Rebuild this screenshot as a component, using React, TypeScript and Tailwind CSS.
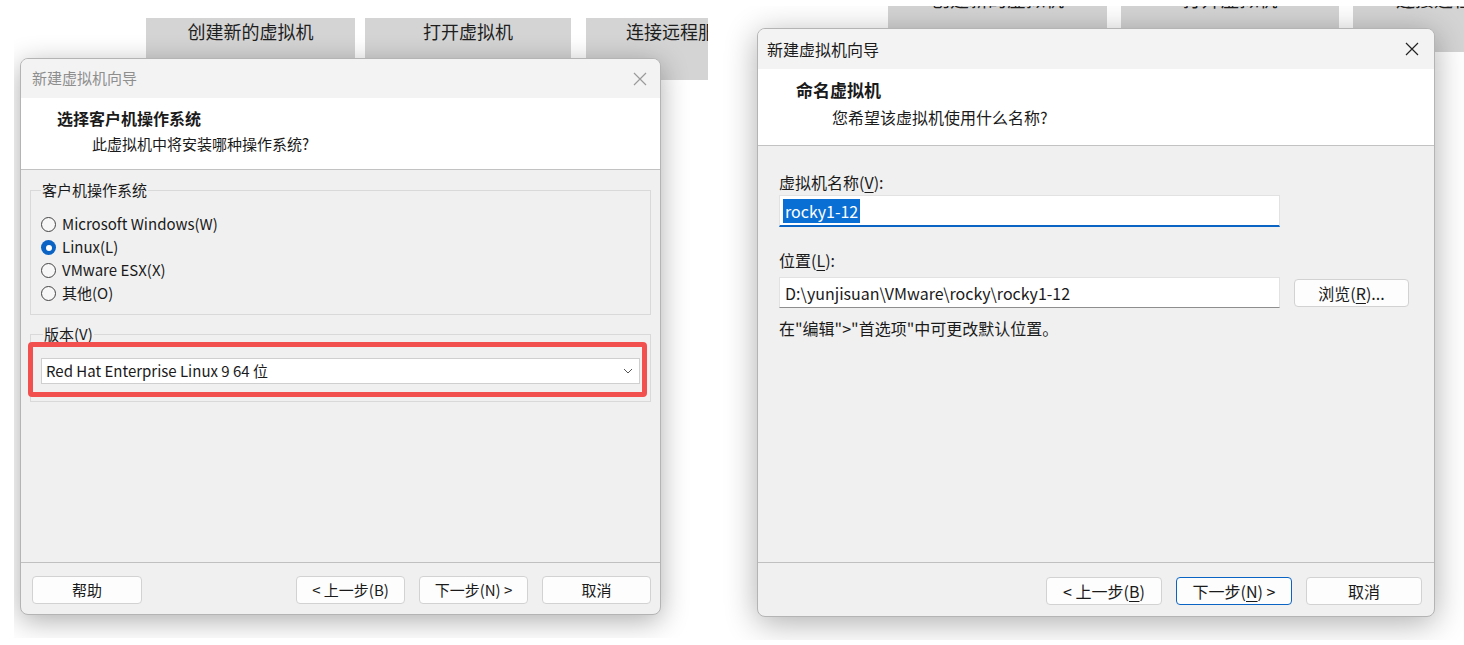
import type { ReactNode } from 'react';

// 向导窗口用到的公共小部件
function CloseIcon({ className }: { className?: string }) {
  return (
    <svg className={className} viewBox="0 0 14 14" fill="none" stroke="currentColor" strokeWidth={1.2}>
      <path d="M1 1l12 12M13 1L1 13" />
    </svg>
  );
}

function Chevron() {
  return (
    <svg className="h-[6px] w-[10px] text-[#555]" viewBox="0 0 10 6" fill="none" stroke="currentColor" strokeWidth={1}>
      <path d="M1 1l4 4 4-4" />
    </svg>
  );
}

function Radio({ label, checked }: { label: string; checked?: boolean }) {
  return (
    <div className="flex h-[23px] items-center">
      {checked ? (
        <span className="flex h-[15px] w-[15px] items-center justify-center rounded-full bg-[#0b63c4]">
          <span className="h-[6px] w-[6px] rounded-full bg-white" />
        </span>
      ) : (
        <span className="h-[15px] w-[15px] rounded-full border border-[#444] bg-[#f7f7f7]" />
      )}
      <span className="ml-[6px]">{label}</span>
    </div>
  );
}

function Btn({ children, className }: { children: ReactNode; className: string }) {
  return (
    <div
      className={`flex h-[28px] flex-none items-center justify-center rounded-[4px] border bg-[#fdfdfd] ${className}`}
    >
      {children}
    </div>
  );
}

function U({ children }: { children: ReactNode }) {
  return <span className="underline underline-offset-[3px]">{children}</span>;
}

function Tab({ label, className }: { label: string; className: string }) {
  return (
    <div className={`flex flex-none justify-center bg-[#d4d4d4] text-[#1e1e1e] ${className}`}>
      {label}
    </div>
  );
}

function OsWizard() {
  return (
    <div className="relative z-10 ml-[6px] -mt-[22px] flex h-[557px] w-[641px] flex-col overflow-hidden rounded-[8px] border border-[#b4b4b4] bg-[#f0f0f0] text-[15px] text-[#1a1a1a] shadow-[0_6px_28px_rgba(0,0,0,0.32)]">
      <div className="flex h-[39px] flex-none items-center justify-between bg-[#f3f3f3] pl-[11px] pr-[13px] text-[#8e8e8e]">
        <span>新建虚拟机向导</span>
        <CloseIcon className="h-[14px] w-[14px] text-[#9a9a9a]" />
      </div>
      <div className="h-[72px] flex-none border-b border-[#c2c2c2] bg-white pl-[36px] pt-[8px]">
        <div className="text-[16px] font-bold leading-[24px]">选择客户机操作系统</div>
        <div className="mt-[3px] pl-[35px] leading-[22px]">此虚拟机中将安装哪种操作系统?</div>
      </div>

      <div className="flex-1 px-[9px] pt-[9px]">
        <fieldset className="border border-[#d9d9d9] px-[10px] pb-[9px] pt-[12px]">
          <legend className="px-[1px] leading-[22px]">客户机操作系统</legend>
          <Radio label="Microsoft Windows(W)" />
          <Radio label="Linux(L)" checked />
          <Radio label="VMware ESX(X)" />
          <Radio label="其他(O)" />
        </fieldset>
        <fieldset className="mt-[8px] border border-[#d9d9d9] px-[10px] pb-[17px] pt-[13px]">
          <legend className="ml-[2px] px-[1px] leading-[22px]">版本(V)</legend>
          <div className="flex h-[26px] items-center justify-between border border-[#cfcfcf] bg-white pl-[4px] pr-[6px]">
            <span>Red Hat Enterprise Linux 9 64 位</span>
            <Chevron />
          </div>
        </fieldset>
      </div>

      <div className="flex h-[52px] flex-none items-start border-t border-[#c0c0c0] pl-[11px] pr-[9px] pt-[13px]">
        <Btn className="w-[110px] border-[#d2d2d2]">帮助</Btn>
        <div className="ml-auto flex gap-[14px]">
          <Btn className="w-[109px] border-[#d2d2d2]">&lt; 上一步(B)</Btn>
          <Btn className="w-[109px] border-[#d2d2d2]">下一步(N) &gt;</Btn>
          <Btn className="w-[109px] border-[#d2d2d2]">取消</Btn>
        </div>
      </div>

      {/* 红框标注版本下拉框 */}
      <div className="absolute left-[7px] top-[283px] h-[55px] w-[619px] rounded-[4px] border-[5px] border-[#f24f4f]" />
    </div>
  );
}

function NameWizard() {
  return (
    <div className="relative z-10 ml-[49px] -mt-[24px] flex h-[589px] w-[678px] flex-col overflow-hidden rounded-[8px] border border-[#b4b4b4] bg-[#f0f0f0] text-[16px] text-[#1a1a1a] shadow-[0_6px_32px_rgba(0,0,0,0.32)]">
      <div className="flex h-[40px] flex-none items-center justify-between bg-[#f3f3f3] pl-[9px] pr-[15px]">
        <span>新建虚拟机向导</span>
        <CloseIcon className="h-[14px] w-[14px] text-[#222]" />
      </div>
      <div className="h-[77px] flex-none border-b border-[#c2c2c2] bg-white pl-[38px] pt-[9px]">
        <div className="text-[17px] font-bold leading-[24px]">命名虚拟机</div>
        <div className="mt-[4px] pl-[36px] leading-[22px]">您希望该虚拟机使用什么名称?</div>
      </div>

      <div className="flex-1 pl-[21px] pt-[25px]">
        <div className="leading-[22px]">
          虚拟机名称(<U>V</U>):
        </div>
        <div className="mt-[2px] flex h-[32px] w-[501px] items-center border border-b-2 border-[#e2e2e2] border-b-[#0a64c4] bg-white pl-[3px]">
          <span className="bg-[#0a6fd4] px-[2px] leading-[24px] text-white">rocky1-12</span>
        </div>
        <div className="mt-[22px] leading-[22px]">
          位置(<U>L</U>):
        </div>
        <div className="mt-[6px] flex items-center gap-[14px]">
          <div className="flex h-[31px] w-[501px] items-center border border-[#e2e2e2] border-b-[#8e8e8e] bg-white pl-[5px]">
            D:\yunjisuan\VMware\rocky\rocky1-12
          </div>
          <Btn className="w-[115px] border-[#d2d2d2]">
            浏览(<U>R</U>)...
          </Btn>
        </div>
        <div className="mt-[9px] leading-[22px]">在"编辑"&gt;"首选项"中可更改默认位置。</div>
      </div>

      <div className="flex h-[54px] flex-none items-start justify-end gap-[14px] border-t border-[#c0c0c0] pr-[12px] pt-[14px]">
        <Btn className="w-[116px] border-[#d2d2d2]">
          &lt; 上一步(<U>B</U>)
        </Btn>
        <Btn className="w-[116px] border-[#0a64c4]">
          下一步(<U>N</U>) &gt;
        </Btn>
        <Btn className="w-[116px] border-[#d2d2d2]">取消</Btn>
      </div>
    </div>
  );
}

export default function App() {
  return (
    <div className="flex h-[645px] w-[1464px] items-start overflow-hidden bg-white font-['Noto_Sans_CJK_SC','Noto_Sans',sans-serif]">
      {/* 第一步：选择操作系统 */}
      <div className="ml-[14px] h-[638px] w-[694px] flex-none overflow-hidden bg-white">
        <div className="flex pl-[132px] pt-[18px] text-[18px] leading-[26px]">
          <Tab label="创建新的虚拟机" className="h-[62px] w-[209px]" />
          <Tab label="打开虚拟机" className="ml-[10px] h-[62px] w-[206px]" />
          <Tab label="连接远程服务器" className="ml-[15px] h-[62px] w-[206px]" />
        </div>
        <OsWizard />
      </div>

      {/* 第二步：命名虚拟机 */}
      <div className="mt-[6px] h-[634px] w-[756px] flex-none overflow-hidden bg-white">
        <div className="-mt-[20px] flex gap-[14px] pl-[180px] text-[19px] leading-[26px]">
          <Tab label="创建新的虚拟机" className="h-[66px] w-[219px]" />
          <Tab label="打开虚拟机" className="h-[66px] w-[218px]" />
          <Tab label="连接远程服务器" className="h-[66px] w-[219px]" />
        </div>
        <NameWizard />
      </div>
    </div>
  );
}
